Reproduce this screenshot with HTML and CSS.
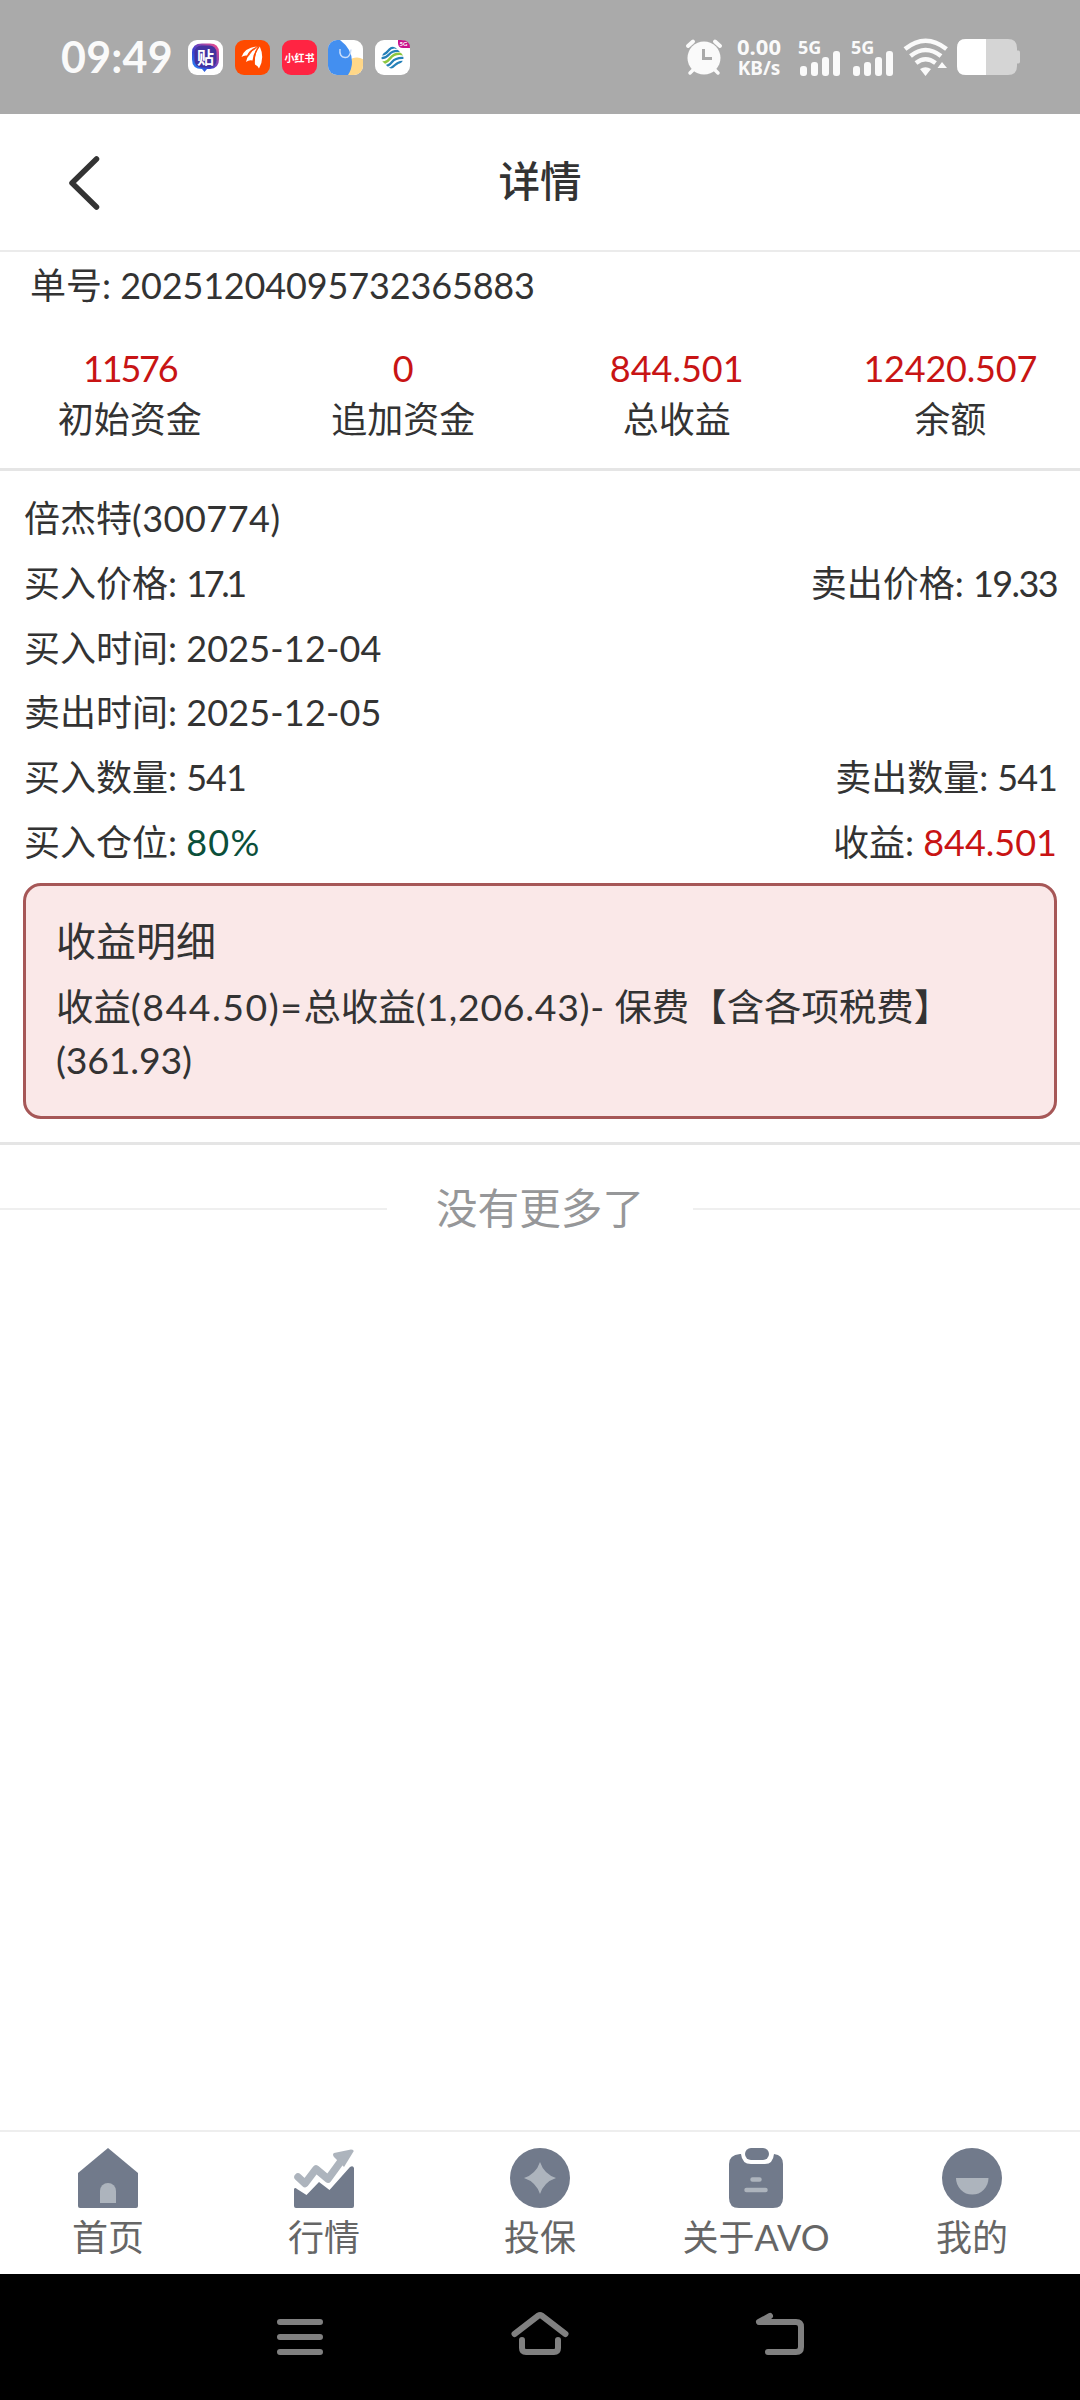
FILE: index.html
```html
<!DOCTYPE html>
<html lang="zh-CN">
<head>
<meta charset="utf-8">
<title>详情</title>
<link rel="stylesheet" href="styles.css">
</head>
<body>
<div class="screen">
  <header class="status">
    <span class="clock">09:49</span>
    <div class="apps">
      <svg class="app" viewBox="0 0 35 35"><defs><linearGradient id="tb" x1="0" y1="1" x2="1" y2="0"><stop offset="0" stop-color="#1f9bff"/><stop offset=".4" stop-color="#3a3fd0"/><stop offset="1" stop-color="#ff4f86"/></linearGradient></defs><rect width="35" height="35" rx="9" fill="#fff"/><path d="M14 3.500h8q9 0 9 9v7q0 9-9 9.500h-3l-2.500 3-2.500-3q-10 0-10-9.500v-7q0-9 10-9z" fill="url(#tb)"/><rect x="6.500" y="5.500" width="22" height="22" rx="7" fill="#43329f"/><text x="17.500" y="23.500" text-anchor="middle" class="glyph glyph-lg">贴</text></svg>
      <svg class="app" viewBox="0 0 35 35"><rect width="35" height="35" rx="9" fill="#ff4a00"/><path d="M6.500 17Q10 7.500 22 6.500Q14 10 12 15.500Q9 15 6.500 17zM11 22Q13 12 23.500 6.500Q18 13 17.500 20.500Q14 19.500 11 22zM20 24.500Q19 13 24.800 6.500Q30 18 24 28.500Q23 26 20 24.500z" fill="#fff"/><path d="M13 16.500Q16 10 23 7M19 21.500Q19.500 12 24 7" fill="none" stroke="#ff4a00" stroke-width=".8"/></svg>
      <svg class="app" viewBox="0 0 35 35"><rect width="35" height="35" rx="9" fill="#ff2442"/><text x="17.500" y="21.500" text-anchor="middle" class="glyph glyph-sm">小红书</text></svg>
      <svg class="app" viewBox="0 0 35 35"><defs><clipPath id="rc"><rect width="35" height="35" rx="9"/></clipPath></defs><g clip-path="url(#rc)"><rect width="35" height="35" fill="#fff"/><circle cx="29" cy="29" r="11.500" fill="#ffd788"/><path d="M0 0H12Q24 9 24 22Q24 29 20 35H0z" fill="#438ff0"/></g><path d="M12 9q-1 8 5 8.500q5 .5 6-8" fill="none" stroke="#c9ddfa" stroke-width="1.500"/></svg>
      <svg class="app" viewBox="0 0 35 35"><defs><clipPath id="cm"><path d="M13 8Q17 5 21 8L27 14Q30 18 27 22L21 27Q17 30 13 27L8 22Q5 18 8 14z"/></clipPath></defs><rect width="35" height="35" rx="9" fill="#fff"/><g clip-path="url(#cm)" fill="none" stroke-width="2.200"><path d="M5 13.500Q9 16 13 11T22 8M5 18Q10 19 14 14.500T25 11" stroke="#2580b8"/><path d="M5 21Q10 25 15 18.500T29 14.500" stroke="#8cc63f" stroke-width="2.600"/><path d="M8 26Q13 27 17 22T30 18M11 30Q16 29 20 25T29 22" stroke="#2580b8"/></g><path d="M23 0h3q9 0 9 8h-7q-5 0-5-5z" fill="#c9128b"/><text x="28.500" y="6" text-anchor="middle" class="badge">5G</text></svg>
    </div>
    <div class="indicators">
      <svg class="alarm" viewBox="0 0 38 38"><g stroke="#fafafa" stroke-width="4" stroke-linecap="round"><path d="M3 8l5-4.500M35 8l-5-4.500" /><path d="M8 32l-3 3M30 32l3 3" stroke-width="3.500"/></g><circle cx="19" cy="20" r="16.500" fill="#fafafa"/><path d="M18.500 11v9.500H27" fill="none" stroke="#aaa" stroke-width="3"/></svg>
      <div class="speed"><span class="rate">0.00</span><span class="unit">KB/s</span></div>
      <svg class="signal" viewBox="0 0 44 38"><text x="0" y="16" class="net">5G</text><g fill="#fafafa"><rect x="2" y="28" width="7" height="10" rx="3"/><rect x="13" y="24" width="7" height="14" rx="3"/><rect x="24" y="19" width="7" height="19" rx="3"/><rect x="35" y="13" width="7" height="25" rx="3"/></g></svg>
      <svg class="signal" viewBox="0 0 44 38"><text x="0" y="16" class="net">5G</text><g fill="#fafafa"><rect x="2" y="28" width="7" height="10" rx="3"/><rect x="13" y="24" width="7" height="14" rx="3"/><rect x="24" y="19" width="7" height="19" rx="3"/><rect x="35" y="13" width="7" height="25" rx="3"/></g></svg>
      <svg class="wifi" viewBox="0 0 46 38"><g fill="none" stroke="#fafafa" stroke-width="4.500"><path d="M2 11Q22.500-5.500 43.500 11"/><path d="M7.500 18Q22.500 6 38 18"/><path d="M13 25Q22.500 17.500 32.500 25"/></g><path d="M17 31q5.500-3.500 11 0l-5.500 7zM34.500 30l4.500-6 5 6z" fill="#fafafa"/></svg>
      <svg class="battery" viewBox="0 0 64 36"><path d="M9 0h42q9 0 9 9v2.500h1.500q1.500 0 1.500 2v9q0 2-1.500 2H60V27q0 9-9 9H9q-9 0-9-9V9Q0 0 9 0z" fill="#d5d5d5"/><path d="M9 0h20v36H9q-9 0-9-9V9q0-9 9-9z" fill="#fff"/></svg>
    </div>
  </header>

  <nav class="titlebar">
    <svg class="back" viewBox="0 0 32 56"><path d="M28.500 4L4 28l24.500 24" /></svg>
    <h1 class="title">详情</h1>
  </nav>

  <section class="account">
    <p class="order">单号: <span class="order-no">20251204095732365883</span></p>
    <div class="stats">
      <div class="stat"><span class="red initial">11576</span><span>初始资金</span></div>
      <div class="stat"><span class="red">0</span><span>追加资金</span></div>
      <div class="stat"><span class="red">844.501</span><span>总收益</span></div>
      <div class="stat"><span class="red balance">12420.507</span><span>余额</span></div>
    </div>
  </section>

  <section class="trade">
    <div class="row"><span>倍杰特<span class="code">(300774)</span></span></div>
    <div class="row"><span>买入价格: <span class="buy-price">17.1</span></span><span>卖出价格: <span class="sell-price">19.33</span></span></div>
    <div class="row"><span>买入时间: <span class="date">2025-12-04</span></span></div>
    <div class="row"><span>卖出时间: <span class="date">2025-12-05</span></span></div>
    <div class="row"><span>买入数量: <span class="qty">541</span></span><span>卖出数量: <span class="qty">541</span></span></div>
    <div class="row"><span>买入仓位: <span class="green">80%</span></span><span>收益: <span class="red">844.501</span></span></div>
    <div class="detail">
      <h2 class="detail-title">收益明细</h2>
      <p class="formula">收益<span class="net-profit">(844.50)=</span>总收益<span class="gross-profit">(1,206.43)-</span> 保费【含各项税费】<span class="fee">(361.93)</span></p>
    </div>
  </section>

  <div class="nomore"><span>没有更多了</span></div>

  <footer class="tabs">
    <div class="tab"><svg class="tab-icon" viewBox="0 0 60 60"><path d="M30 0L60 25v33q0 2-2 2H2q-2 0-2-2V25z" fill="#717a8b"/><path d="M22 55V43a8 8 0 0 1 16 0v12z" fill="#adb4bd"/></svg><span>首页</span></div>
    <div class="tab"><svg class="tab-icon" viewBox="0 0 60 60"><path d="M0 41q1-2 3 0l9.500 6L25 34l10.500 8L56 19q3-2 4 1v38q0 2-2 2H2q-2 0-2-2z" fill="#717a8b"/><path d="M4 29l7 6.500L22 21l12 10L50 9" fill="none" stroke="#adb4bd" stroke-width="7.500" stroke-linecap="round" stroke-linejoin="round"/><path d="M40 5L57 1.500q3 0 2.500 2L50 19 40 9q-2-3 0-4z" fill="#adb4bd"/></svg><span>行情</span></div>
    <div class="tab"><svg class="tab-icon" viewBox="0 0 60 60"><circle cx="30" cy="30" r="30" fill="#717a8b"/><path d="M30 14Q34 26 46 30Q34 34 30 46Q26 34 14 30Q26 26 30 14z" fill="#adb4bd"/></svg><span>投保</span></div>
    <div class="tab"><svg class="tab-icon" viewBox="0 0 60 60"><path d="M14 6h1q1 10 10 10h14q8 0 9-10q9 1 9 10v34q0 10-10 10H13Q3 60 3 50V16Q3 7 14 6z" fill="#717a8b"/><rect x="19" y="0" width="24" height="12" rx="6" fill="#717a8b"/><path d="M26.500 31.500h7M20.500 42h19" stroke="#adb4bd" stroke-width="4.500" stroke-linecap="round"/></svg><span>关于AVO</span></div>
    <div class="tab"><svg class="tab-icon" viewBox="0 0 60 60"><circle cx="30" cy="30" r="30" fill="#717a8b"/><path d="M14 30h32.500a16.200 16.500 0 0 1-32.500 0z" fill="#adb4bd"/></svg><span>我的</span></div>
  </footer>

  <div class="sysnav">
    <svg class="key" viewBox="0 0 60 50"><path d="M10 12h40M10 27h40M10 42h40"/></svg>
    <svg class="key" viewBox="0 0 60 50"><path d="M4.500 24L28.500 5.500q1.500-1 3 0l24 18.500M12 30v8q0 4 4 4h28q4 0 4-4v-8"/></svg>
    <svg class="key" viewBox="0 0 60 50"><path d="M20 6L9 12h37q5 0 5 5v20q0 5-5 5H18"/></svg>
  </div>
</div>
</body>
</html>
```
FILE: styles.css
```css
* { box-sizing: border-box; margin: 0; padding: 0; }
body { font-family: Lato, "Noto Sans CJK SC", sans-serif; font-size: 36px; color: #333; background: #fff; }
svg { display: block; flex: none; overflow: visible; }
.screen { width: 1080px; height: 2400px; display: flex; flex-direction: column; overflow: hidden; }

.status { height: 114px; flex: none; background: #aaa; color: #fafafa; display: flex; align-items: center; padding: 0 59px 0 61px; }
.clock { font-size: 43px; font-weight: 700; letter-spacing: .2px; width: 127px; white-space: nowrap; line-height: 60px; }
.apps { display: flex; gap: 11.750px; }
.app { width: 35px; height: 35px; }
.glyph { font-family: "Noto Sans CJK SC", sans-serif; font-weight: 700; fill: #fff; }
.glyph-lg { font-size: 17px; }
.glyph-sm { font-size: 10px; }
.badge { font-size: 6px; font-weight: 700; fill: #fff; }
.indicators { margin-left: auto; display: flex; align-items: center; }
.alarm { width: 38px; height: 38px; margin-right: 13px; }
.speed { display: flex; flex-direction: column; align-items: center; width: 46px; margin-right: 16px; font-family: "Noto Sans", sans-serif; font-weight: 700; white-space: nowrap; }
.rate { font-size: 22px; line-height: 23px; }
.unit { font-size: 19px; line-height: 21px; }
.signal { width: 44px; height: 38px; margin-right: 9px; }
.net { font-family: "Noto Sans", sans-serif; font-weight: 700; font-size: 18px; fill: #fafafa; }
.wifi { width: 46px; height: 38px; margin: 0 8px 0 -1px; }
.battery { width: 64px; height: 36px; }

.titlebar { height: 138px; flex: none; border-bottom: 2px solid #ebebeb; display: grid; grid-template-columns: 1fr auto 1fr; align-items: center; }
.back { width: 32px; height: 56px; margin: 2px 0 0 68px; fill: none; stroke: #333; stroke-width: 5.500; stroke-linecap: round; stroke-linejoin: round; }
.title { font-size: 41.600px; font-weight: 500; line-height: 60px; padding-bottom: 2px; }

.account { height: 219px; flex: none; border-bottom: 3px solid #e5e5e5; padding-top: 6px; }
.order { line-height: 54px; padding-left: 30px; }
.order-no { letter-spacing: -.15px; }
.stats { display: grid; grid-template-columns: repeat(4, 273.500px); justify-content: center; margin-top: 31px; }
.stat { display: flex; flex-direction: column; align-items: center; line-height: 51px; }
.initial { letter-spacing: -2.200px; }
.balance { letter-spacing: -.2px; }
.red { color: #c81414; }
.green { color: #0b4f3a; letter-spacing: 1.200px; }

.trade { height: 674px; flex: none; border-bottom: 3px solid #e5e5e5; padding: 15px 23px 0; }
.row { display: flex; justify-content: space-between; line-height: 64.800px; height: 64.800px; padding: 0 0 0 1px; white-space: nowrap; }
.code { letter-spacing: .5px; }
.buy-price { letter-spacing: -3.400px; }
.sell-price { letter-spacing: -1.600px; }
.date { letter-spacing: .15px; }
.qty { letter-spacing: -1px; }
.detail { height: 236px; margin-top: 8.200px; border: 3px solid #a65757; border-radius: 18px; background: #fae8e8; padding: 25px 30px; }
.detail-title { font-size: 40px; font-weight: 400; line-height: 60px; }
.formula { font-size: 37.440px; line-height: 53px; margin-top: 9px; }
.net-profit { letter-spacing: 1.500px; }
.gross-profit { letter-spacing: .7px; }
.fee { letter-spacing: -.2px; }

.nomore { flex: none; height: 128px; display: flex; align-items: center; gap: 49px; font-size: 41.600px; color: #969799; line-height: 60px; }
.nomore span { padding-bottom: 2px; }
.nomore::before, .nomore::after { content: ""; flex: 1; height: 2px; background: #efefef; }

.tabs { margin-top: auto; flex: none; height: 144px; border-top: 2px solid #eee; display: grid; grid-template-columns: repeat(5, 1fr); padding-top: 16px; color: #666; }
.tab { display: flex; flex-direction: column; align-items: center; white-space: nowrap; line-height: 54px; gap: 2px; }
.tab-icon { width: 60px; height: 60px; }

.sysnav { height: 126px; flex: none; background: #000; display: flex; justify-content: center; gap: 180px; padding-top: 36px; }
.key { width: 60px; height: 50px; fill: none; stroke: #808080; stroke-width: 6; stroke-linecap: round; stroke-linejoin: round; }
```
